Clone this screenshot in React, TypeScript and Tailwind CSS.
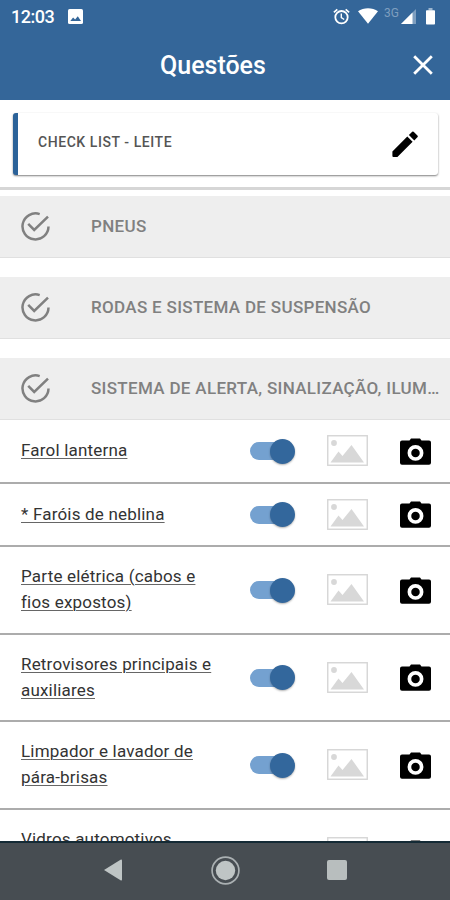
import React from 'react';

interface Question {
  lines: string[];
  /** Row height, bottom divider included. */
  height: string;
}

const SECTIONS = [
  { title: 'PNEUS', spacing: 'mb-[19px] h-[62px]' },
  { title: 'RODAS E SISTEMA DE SUSPENSÃO', spacing: 'mb-[19px] h-[62px]' },
  { title: 'SISTEMA DE ALERTA, SINALIZAÇÃO, ILUM…', spacing: 'h-[62px]' },
];

const QUESTIONS: Question[] = [
  { lines: ['Farol lanterna'], height: 'h-[64px]' },
  { lines: ['* Faróis de neblina'], height: 'h-[63px]' },
  { lines: ['Parte elétrica (cabos e', 'fios expostos)'], height: 'h-[88px]' },
  { lines: ['Retrovisores principais e', 'auxiliares'], height: 'h-[87px]' },
  { lines: ['Limpador e lavador de', 'pára-brisas'], height: 'h-[88px]' },
  { lines: ['Vidros automotivos', '\u00a0'], height: 'h-[88px]' },
];

export default function App(): React.ReactElement {
  return (
    <div className="flex h-[900px] w-[450px] flex-col overflow-hidden bg-white font-[Roboto,sans-serif]">
      <header className="h-[100px] shrink-0 bg-[#346699] text-white">
        <StatusBar />
        <div className="flex h-[68px] items-center justify-between pr-[17px] pb-[2px] pl-[160px]">
          <h1 className="text-[25px] font-medium leading-none">Questões</h1>
          <button aria-label="Fechar">
            <svg className="h-[20px] w-[20px]" viewBox="0 0 20 20" fill="none" stroke="currentColor" strokeWidth="2.8">
              <path d="M1.2 1.2l17.6 17.6M18.8 1.2L1.2 18.8" />
            </svg>
          </button>
        </div>
      </header>

      <main className="min-h-0 flex-1 overflow-hidden">
        <div className="h-[90px] border-b-[3px] border-[#d6d6d6] pt-[13px] pr-[12px] pl-[13px]">
          <div className="flex h-[62px] items-center justify-between rounded-[3px] border-l-[5px] border-[#2b6299] bg-white pr-[19px] pl-5 shadow-[0_1px_2px_rgba(0,0,0,0.5)]">
            <span className="pb-[4px] text-[14px] font-medium tracking-[0.56px] text-[#555]">CHECK LIST - LEITE</span>
            <PencilIcon />
          </div>
        </div>

        <div className="pt-[6px]">
          {SECTIONS.map((s) => (
            <div
              key={s.title}
              className={`flex items-center border-b border-[#e0e0e0] bg-[#eeeeee] pl-[21px] text-[#808080] ${s.spacing}`}
            >
              <CheckIcon />
              <h2 className="ml-[41px] pt-px text-[17px] font-medium tracking-[0.32px] whitespace-nowrap">{s.title}</h2>
            </div>
          ))}
        </div>

        <ul>
          {QUESTIONS.map((q) => <QuestionRow key={q.lines[0]} question={q} />)}
        </ul>
      </main>

      <NavigationBar />
    </div>
  );
}

function StatusBar(): React.ReactElement {
  return (
    <div className="flex h-8 items-center pr-[15px] pl-[11px]">
      <span className="w-[57px] pt-px text-[18px] font-medium leading-none tracking-[-0.5px]">12:03</span>
      <svg className="h-[15px] w-[15px]" viewBox="0 0 15 15">
        <rect width="15" height="15" rx="1.6" fill="#fff" />
        <path d="M2.3 12l2.8-3.6 2 2.2L9.8 7.2l3.2 4.8z" fill="#346699" />
      </svg>
      <div className="ml-auto flex items-center">
        <svg className="h-[17px] w-[17px]" viewBox="0 0 17 17" fill="none" stroke="#fff" strokeWidth="1.8">
          <circle cx="8.5" cy="9.2" r="6.2" />
          <path d="M.9 4.4l3.4-3M16.1 4.4l-3.4-3" />
          <path d="M8.3 5.6v4l2.9 1.9" strokeWidth="1.4" />
        </svg>
        <svg className="ml-[8px] h-[16px] w-[20px]" viewBox="0 0 20 16" fill="#fff">
          <path d="M10 15.7L0 3.2C5.5-.9 14.5-.9 20 3.2z" />
        </svg>
        <span className="mb-[6px] ml-[6px] w-[17px] text-[12px] leading-none text-[#7e9ebf]">3G</span>
        <svg className="h-[15px] w-[15px]" viewBox="0 0 15 15">
          <path d="M0 15L15 0v15z" fill="#7e9ebf" />
          <path d="M0 15L11.500 3.500v11.500z" fill="#fff" />
        </svg>
        <svg className="ml-[10px] h-[17px] w-[9px]" viewBox="0 0 9 17">
          <path d="M2.5 0h4v2.500h-4z" fill="#9db6cf" />
          <rect y="2.3" width="9" height="14.2" rx=".8" fill="#fff" />
        </svg>
      </div>
    </div>
  );
}

function QuestionRow({ question }: { question: Question }): React.ReactElement {
  return (
    <li className={`flex items-center border-b-2 border-[#acacac] pl-[21px] ${question.height}`}>
      <p className="w-[229px] pb-[2px] text-[17px] leading-[26px] tracking-[0.19px] text-[#333] underline decoration-[#666] decoration-1 underline-offset-[2px]">
        {question.lines.map((line) => <span key={line} className="block whitespace-nowrap">{line}</span>)}
      </p>
      <Toggle />
      <PlaceholderImage />
      <CameraIcon />
    </li>
  );
}

function Toggle(): React.ReactElement {
  return (
    <button role="switch" aria-checked className="flex h-[18px] w-[44px] items-center justify-end rounded-full bg-[#74a1d0]">
      <span className="-mr-px h-[25px] w-[25px] shrink-0 rounded-full bg-[#33679c] shadow-[0_1px_2px_rgba(0,0,0,0.3)]" />
    </button>
  );
}

function PlaceholderImage(): React.ReactElement {
  return (
    <svg className="mb-px ml-[33px] h-[31px] w-[41px]" viewBox="0 0 41 31">
      <rect x=".75" y=".75" width="39.5" height="29.5" fill="#fff" stroke="#d6d6d6" strokeWidth="1.4" />
      <circle cx="7" cy="8" r="2.9" fill="#d8d8d8" />
      <path d="M3.5 27.5L11.5 16.5l4 4.5L24.5 10 37 27.5z" fill="#d8d8d8" />
    </svg>
  );
}

function CameraIcon(): React.ReactElement {
  return (
    <svg className="ml-[32px] h-[27px] w-[31px]" viewBox="0 0 31 27">
      <path
        d="M2 2.500h7.500L11 .4h9l1.500 2.100H29a2 2 0 0 1 2 2V24.800a2 2 0 0 1-2 2H2a2 2 0 0 1-2-2V4.500a2 2 0 0 1 2-2z"
        fill="#000"
      />
      <circle cx="15.5" cy="14.9" r="6.1" fill="none" stroke="#fff" strokeWidth="3.7" />
    </svg>
  );
}

function CheckIcon(): React.ReactElement {
  return (
    <svg className="h-[29px] w-[29px] shrink-0" viewBox="0 0 29 29" fill="none" stroke="currentColor" strokeWidth="2.5">
      <path d="M18.7 2.1A13 13 0 1 0 27.5 14.5" />
      <path d="M7.2 11.9l6 6L27 4.6" />
    </svg>
  );
}

function PencilIcon(): React.ReactElement {
  return (
    <svg className="h-[26px] w-[27px] shrink-0" viewBox="0 0 27 26" fill="#000">
      <path d="M.4 20.6L15.3 5.5l5.3 5.3L5.9 25.5q-.4.5-1 .5H1.4Q.4 26 .4 25z" />
      <path d="M16.9 4L20.2.7q.7-.6 1.4 0l4 4q.6.7 0 1.4L22.3 9.4z" />
    </svg>
  );
}

function NavigationBar(): React.ReactElement {
  return (
    <nav className="flex h-[59px] shrink-0 items-center border-t-2 border-[#142a35] bg-[#474d52] pb-[3px] pl-[104px]">
      <svg className="h-[22px] w-[18px]" viewBox="0 0 18 22" fill="#bfc5c5">
        <path d="M0 11L16.5.8Q18 .2 18 1.500v19q0 1.300-1.500.7z" />
      </svg>
      <svg className="ml-[89px] h-[29px] w-[29px]" viewBox="0 0 29 29">
        <circle cx="14.5" cy="14.5" r="13.4" fill="none" stroke="#aab0b2" strokeWidth="1.7" />
        <circle cx="14.5" cy="14.5" r="9.7" fill="#bfc5c5" />
      </svg>
      <span className="ml-[87px] h-[20px] w-[20px] rounded-[2px] bg-[#b8bebe]" />
    </nav>
  );
}
